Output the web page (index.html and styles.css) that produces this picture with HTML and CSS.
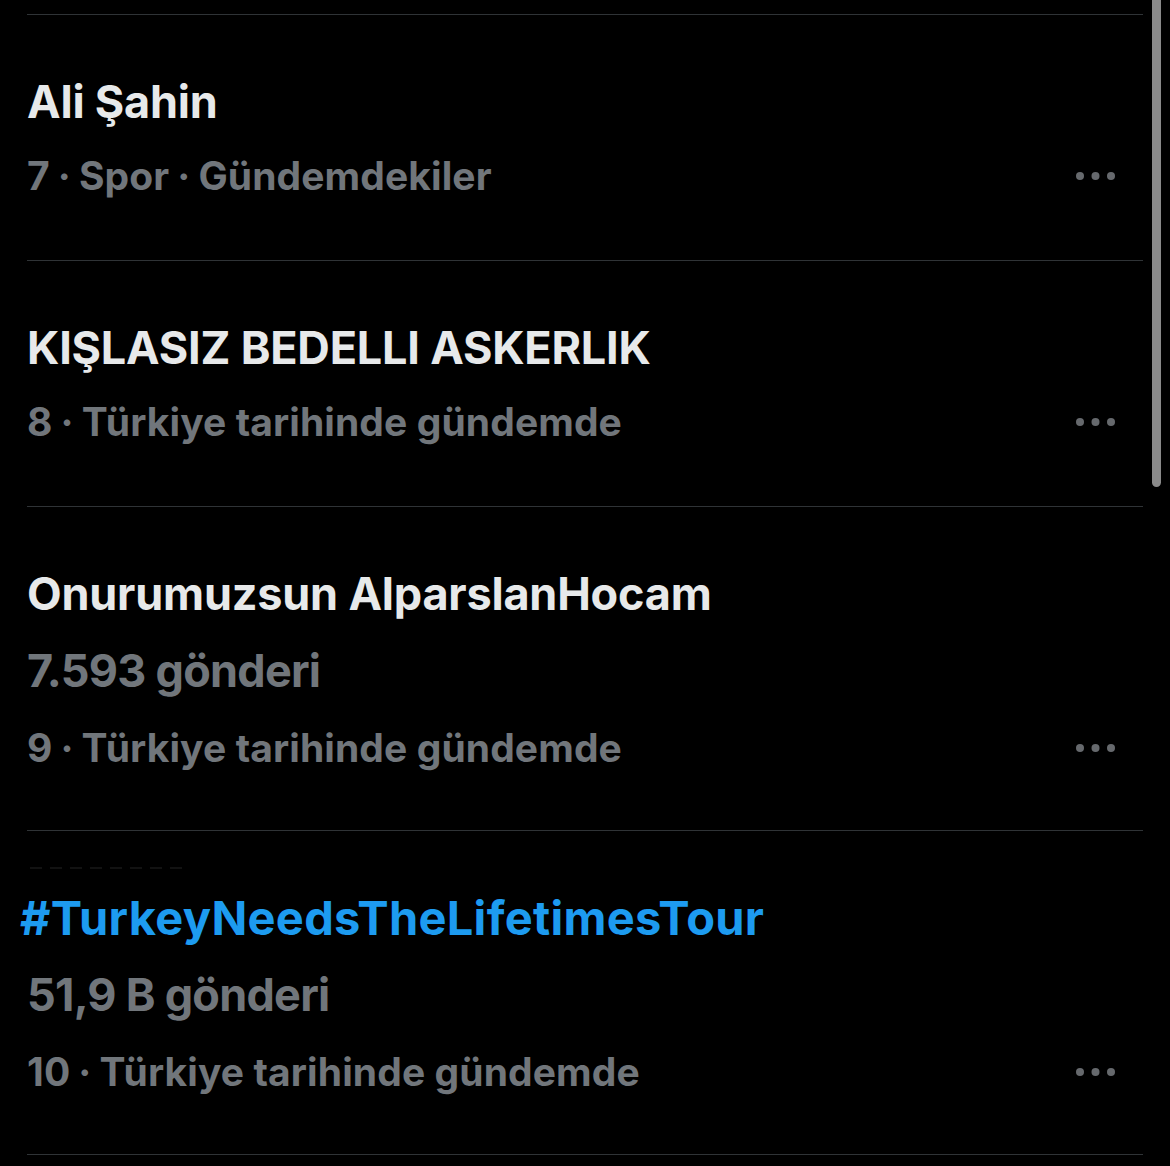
FILE: index.html
```html
<!DOCTYPE html>
<html lang="tr">
<head>
<meta charset="utf-8">
<title>Gündem</title>
<link rel="stylesheet" href="styles.css">
</head>
<body>
<div class="page">
  <div class="list">
    <div class="trend">
      <div class="title">Ali Şahin</div>
      <div class="meta">
        <span class="meta-text">7<span class="sep">·</span>Spor<span class="sep">·</span>Gündemdekiler</span>
        <svg class="dots" viewBox="0 0 43 10" width="43" height="10"><circle cx="4" cy="5" r="4"/><circle cx="19.5" cy="5" r="4"/><circle cx="35" cy="5" r="4"/></svg>
      </div>
    </div>
    <div class="trend">
      <div class="title">KIŞLASIZ BEDELLI ASKERLIK</div>
      <div class="meta">
        <span class="meta-text">8<span class="sep">·</span>Türkiye tarihinde gündemde</span>
        <svg class="dots" viewBox="0 0 43 10" width="43" height="10"><circle cx="4" cy="5" r="4"/><circle cx="19.5" cy="5" r="4"/><circle cx="35" cy="5" r="4"/></svg>
      </div>
    </div>
    <div class="trend trend-count">
      <div class="title">Onurumuzsun AlparslanHocam</div>
      <div class="count">7.593 gönderi</div>
      <div class="meta meta-after-count">
        <span class="meta-text">9<span class="sep">·</span>Türkiye tarihinde gündemde</span>
        <svg class="dots" viewBox="0 0 43 10" width="43" height="10"><circle cx="4" cy="5" r="4"/><circle cx="19.5" cy="5" r="4"/><circle cx="35" cy="5" r="4"/></svg>
      </div>
    </div>
    <div class="trend trend-count">
      <div class="ghost"></div>
      <div class="title hashtag">#TurkeyNeedsTheLifetimesTour</div>
      <div class="count">51,9 B gönderi</div>
      <div class="meta meta-after-count">
        <span class="meta-text">10<span class="sep">·</span>Türkiye tarihinde gündemde</span>
        <svg class="dots" viewBox="0 0 43 10" width="43" height="10"><circle cx="4" cy="5" r="4"/><circle cx="19.5" cy="5" r="4"/><circle cx="35" cy="5" r="4"/></svg>
      </div>
    </div>
  </div>
  <div class="scrollbar"></div>
</div>
</body>
</html>
```
FILE: styles.css
```css
html, body {
  margin: 0;
  padding: 0;
  background: #000;
}
body {
  font-family: Inter, "Noto Sans", "Liberation Sans", sans-serif;
  font-weight: 700;
  -webkit-font-smoothing: antialiased;
}
.page {
  position: relative;
  width: 1170px;
  height: 1166px;
  overflow: hidden;
}
.list {
  margin: 14px 27px 0 27px;
  border-top: 1px solid #2f3336;
}
.trend {
  position: relative;
  padding: 60px 0 60px 0;
  border-bottom: 1px solid #2f3336;
}
.trend-count {
  padding-bottom: 58px;
}
.title {
  font-size: 45px;
  line-height: 54px;
  color: #e7e9ea;
  white-space: nowrap;
  letter-spacing: -0.2px;
}
.hashtag {
  color: #1d9bf0;
  font-size: 47px;
  letter-spacing: 0.3px;
  margin-left: -7px;
}
.count {
  margin-top: 23px;
  font-size: 45px;
  line-height: 54px;
  color: #71767b;
  white-space: nowrap;
  letter-spacing: -0.75px;
}
.meta {
  margin-top: 23px;
  height: 48px;
  display: flex;
  align-items: center;
  justify-content: space-between;
  padding-right: 24px;
}
.meta-after-count {
  margin-top: 26px;
}
.meta-text {
  font-size: 39px;
  line-height: 48px;
  color: #71767b;
  white-space: nowrap;
  letter-spacing: 0.1px;
}
.sep {
  margin: 0 8px;
}
.dots {
  display: block;
  fill: #66696d;
}
.ghost {
  position: absolute;
  left: 3px;
  top: 36px;
  width: 160px;
  height: 2px;
  background: repeating-linear-gradient(90deg, #121212 0 12px, transparent 12px 20px);
}
.scrollbar {
  position: absolute;
  top: 0;
  right: 9px;
  width: 9px;
  height: 487px;
  background: #8a8a8a;
  border-radius: 0 0 5px 5px;
}
```
